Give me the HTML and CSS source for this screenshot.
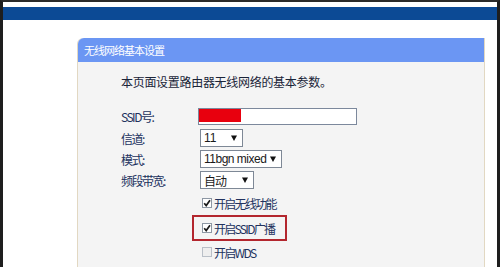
FILE: index.html
```html
<!DOCTYPE html>
<html lang="zh-CN">
<head>
    <meta charset="UTF-8">
    <title>无线网络基本设置</title>
    <link rel="stylesheet" href="styles.css">
</head>
<body>
    <div class="window">
        <div class="topbar"></div>
        <div class="content">
            <div class="panel">
                <div class="panel-head">无线网络基本设置</div>
                <div class="panel-body">
                    <p class="desc">本页面设置路由器无线网络的基本参数。</p>
                    <div class="form">
                        <div class="row">
                            <span class="row-label">SSID号:</span>
                            <div class="ssid-input"><div class="mask"></div></div>
                        </div>
                        <div class="row">
                            <span class="row-label">信道:</span>
                            <div class="select select-channel"><span>11</span><svg class="arrow" width="6" height="6" viewBox="0 0 6 6"><polygon points="0,0.5 6,0.5 3,6" /></svg></div>
                        </div>
                        <div class="row row-short">
                            <span class="row-label">模式:</span>
                            <div class="select select-mode"><span>11bgn mixed</span><svg class="arrow" width="6" height="6" viewBox="0 0 6 6"><polygon points="0,0.5 6,0.5 3,6" /></svg></div>
                        </div>
                        <div class="row">
                            <span class="row-label">频段带宽:</span>
                            <div class="select select-width"><span class="cjk">自动</span><svg class="arrow" width="6" height="6" viewBox="0 0 6 6"><polygon points="0,0.5 6,0.5 3,6" /></svg></div>
                        </div>
                        <div class="row row-check row-first">
                            <span class="check checked"><svg width="8" height="8" viewBox="0 0 8 8"><path d="M1.2 4.2 L3.2 6.6 L7 1.2" /></svg></span>
                            <span class="check-text">开启无线功能</span>
                        </div>
                        <div class="row row-mark">
                            <div class="highlight">
                                <span class="check checked"><svg width="8" height="8" viewBox="0 0 8 8"><path d="M1.2 4.2 L3.2 6.6 L7 1.2" /></svg></span>
                                <span class="check-text">开启SSID广播</span>
                            </div>
                        </div>
                        <div class="row row-check">
                            <span class="check"></span>
                            <span class="check-text">开启WDS</span>
                        </div>
                    </div>
                </div>
            </div>
        </div>
    </div>
</body>
</html>
```

FILE: styles.css
```css
body {
    margin: 0;
    width: 500px;
    height: 267px;
    overflow: hidden;
    background: #fff;
    font-family: "Noto Sans CJK SC", sans-serif;
}
.window {
    height: 267px;
    box-sizing: border-box;
    border-top: 2px solid #2b2b2b;
    border-left: 3px solid #1e1e1e;
    border-right: 3px solid #1e1e1e;
}
.topbar {
    margin-top: 5px;
    height: 13px;
    background: #0c4a95;
}
.content {
    padding: 18px 0 0 74px;
}
.panel {
    width: 408px;
    box-sizing: border-box;
    border: 1px solid #e2d8c2;
    border-top: none;
    border-radius: 6px 0 0 0;
    background: #f4f4f4;
    height: 240px;
}
.panel-head {
    height: 24px;
    line-height: 24px;
    background: #6b96f3;
    border-radius: 6px 0 0 0;
    color: #fff;
    font-size: 11px;
    letter-spacing: -1px;
    padding-left: 6px;
}
.panel-body {
    padding: 12px 0 0 43px;
}
.desc {
    margin: 0;
    height: 16px;
    line-height: 16px;
    font-size: 12px;
    letter-spacing: -0.3px;
    color: #1a2438;
}
.form {
    margin-top: 15px;
}
.row {
    display: flex;
    align-items: center;
    height: 22px;
    font-size: 12px;
    color: #22325e;
}
.row-short {
    height: 20px;
}
.row-label {
    width: 77px;
    letter-spacing: -1.5px;
}
.ssid-input {
    width: 159px;
    height: 17px;
    box-sizing: border-box;
    border: 1px solid #7c889c;
    background: #fff;
}
.mask {
    width: 42px;
    height: 13px;
    background: #e8000e;
}
.select {
    display: flex;
    align-items: center;
    justify-content: space-between;
    height: 18px;
    box-sizing: border-box;
    margin-left: 2px;
    padding: 0 5px 0 3px;
    border: 1px solid #7e8896;
    background: #fff;
    font-family: "Liberation Sans", sans-serif;
    font-size: 12px;
    color: #1a1a1a;
    white-space: nowrap;
}
.select span {
    flex-shrink: 0;
}
.select .arrow {
    flex-shrink: 0;
}
.select .cjk {
    font-family: "Noto Sans CJK SC", sans-serif;
    letter-spacing: -1px;
}
.select-channel { width: 43px; }
.select-mode {
    width: 82px;
    letter-spacing: -0.5px;
}
.select-width { width: 54px; }
.arrow polygon {
    fill: #111;
}
.row-check {
    padding-left: 81px;
}
.row-first {
    height: 24px;
}
.row-mark {
    height: 26px;
}
.highlight {
    display: flex;
    align-items: center;
    margin-left: 71px;
    width: 95px;
    height: 26px;
    box-sizing: border-box;
    border: 2px solid #b3262e;
    padding-left: 8px;
}
.check {
    display: flex;
    align-items: center;
    justify-content: center;
    width: 10px;
    height: 10px;
    box-sizing: border-box;
    border: 1px solid #b9bfc7;
    background: #eeeeee;
}
.check.checked {
    border-color: #8d97a3;
    background: #fff;
}
.check svg path {
    fill: none;
    stroke: #1a1a1a;
    stroke-width: 1.7;
}
.check-text {
    margin-left: 2px;
    letter-spacing: -1.7px;
}
```
